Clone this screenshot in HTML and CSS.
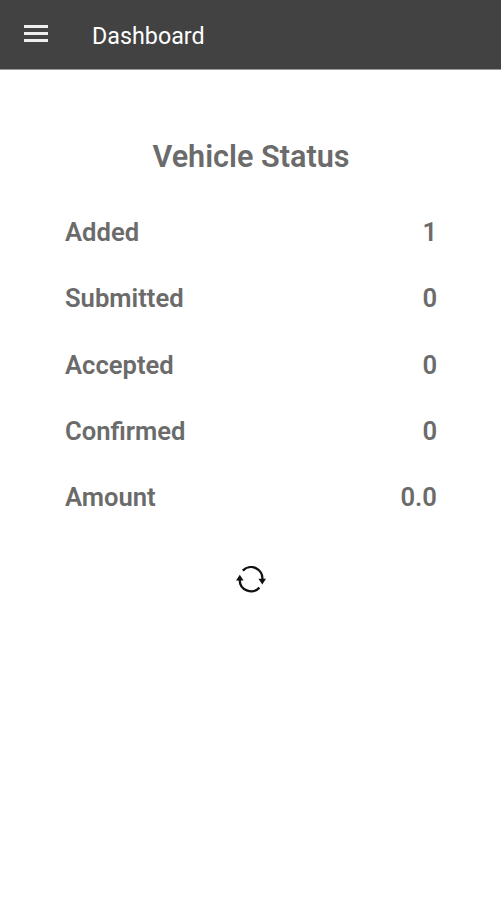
FILE: index.html
```html
<!DOCTYPE html>
<html lang="en">
<head>
  <meta charset="UTF-8">
  <meta name="viewport" content="width=device-width, initial-scale=1.0">
  <title>Dashboard</title>
  <link rel="stylesheet" href="styles.css">
</head>
<body>

<header class="toolbar">
  <button class="menu-btn" aria-label="Menu">
    <svg width="24" height="17" viewBox="0 0 24 17">
      <path d="M0 1.5h24M0 8.5h24M0 15.5h24" stroke="#eee" stroke-width="2.8"/>
    </svg>
  </button>
  <h1>Dashboard</h1>
</header>

<main class="content">
  <h2>Vehicle Status</h2>
  <ul class="status-list">
    <li><span>Added</span><span>1</span></li>
    <li><span>Submitted</span><span>0</span></li>
    <li><span>Accepted</span><span>0</span></li>
    <li><span>Confirmed</span><span>0</span></li>
    <li><span>Amount</span><span>0.0</span></li>
  </ul>
  <button class="refresh-btn" aria-label="Refresh">
    <svg width="30" height="27" viewBox="0 0 30 27">
      <g fill="none" stroke="#111" stroke-width="2.3">
        <path d="M6.8 4.6A11.4 11.4 0 0 1 26.4 13.4"/>
        <path d="M3.7 13.5A11.4 11.4 0 0 0 23.4 21.6"/>
      </g>
      <path d="M0 14.5L3.8 8.7L7.6 14.5zM22.4 12.8H30L26.3 18.5z" fill="#111"/>
    </svg>
  </button>
</main>

</body>
</html>
```
FILE: styles.css
```css
body {
  margin: 0;
  font-family: Roboto, sans-serif;
  background-color: #fff;
  color: #6b6b6b;
}

button {
  padding: 0;
  border: none;
  background: none;
  cursor: pointer;
}

svg {
  display: block;
}

/* Toolbar */
.toolbar {
  display: flex;
  align-items: center;
  height: 70px;
  padding: 0 24px 2px;
  box-sizing: border-box;
  border-bottom: 1px solid #999;
  background-color: #424242;
}

.toolbar h1 {
  margin: 4px 0 0 44px;
  color: #fff;
  font-size: 23.3px;
  font-weight: 400;
}

/* Vehicle status */
.content {
  padding: 69px 64px 0 65px;
}

.content h2 {
  margin: 0;
  text-align: center;
  font-size: 30.6px;
  font-weight: 600;
  line-height: 36px;
}

.status-list {
  list-style: none;
  margin: 24px 0 0;
  padding: 0;
}

.status-list li {
  display: flex;
  justify-content: space-between;
  height: 66.3px;
  line-height: 66.3px;
  font-size: 25.6px;
  font-weight: 600;
}

.refresh-btn {
  display: block;
  margin: 36px auto 0;
}
```
